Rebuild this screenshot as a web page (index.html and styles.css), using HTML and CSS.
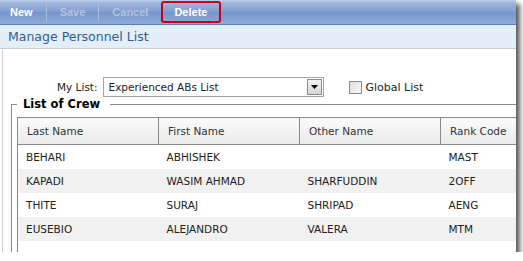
FILE: index.html
```html
<!DOCTYPE html>
<html lang="en">
<head>
    <meta charset="UTF-8">
    <title>Manage Personnel List</title>
    <link rel="stylesheet" href="styles.css">
</head>
<body>
    <div class="window">
        <div class="toolbar">
            <span class="tb-btn">New</span>
            <span class="tb-sep"></span>
            <span class="tb-btn off">Save</span>
            <span class="tb-sep"></span>
            <span class="tb-btn off">Cancel</span>
            <span class="tb-btn marked">Delete</span>
        </div>
        <div class="titlebar">Manage Personnel List</div>
        <div class="content">
            <div class="list-row">
                <span class="label">My List:</span>
                <div class="select">
                    <span class="select-text">Experienced ABs List</span>
                    <span class="select-arrow">
                        <svg width="7" height="4" viewBox="0 0 7 4"><path d="M0 0h7L3.5 4z" fill="#000"/></svg>
                    </span>
                </div>
                <span class="check"><span class="check-box"></span>Global List</span>
            </div>
            <fieldset class="crew">
                <legend>List of Crew</legend>
                <table class="grid">
                    <thead>
                        <tr><th>Last Name</th><th>First Name</th><th>Other Name</th><th>Rank Code</th></tr>
                    </thead>
                    <tbody>
                        <tr><td>BEHARI</td><td>ABHISHEK</td><td></td><td>MAST</td></tr>
                        <tr class="alt"><td>KAPADI</td><td>WASIM AHMAD</td><td>SHARFUDDIN</td><td>2OFF</td></tr>
                        <tr><td>THITE</td><td>SURAJ</td><td>SHRIPAD</td><td>AENG</td></tr>
                        <tr class="alt"><td>EUSEBIO</td><td>ALEJANDRO</td><td>VALERA</td><td>MTM</td></tr>
                        <tr><td></td><td></td><td></td><td></td></tr>
                    </tbody>
                </table>
            </fieldset>
        </div>
    </div>
</body>
</html>
```

FILE: styles.css
```css
body {
    margin: 0;
    background-color: #ffffff;
    font-family: "DejaVu Sans", Verdana, sans-serif;
}
.window {
    width: 516px;
    height: 252px;
    overflow: hidden;
    background-color: #ffffff;
    box-shadow: 4px 4px 5px rgba(0, 0, 0, 0.65);
    display: flex;
    flex-direction: column;
}
.toolbar {
    height: 24px;
    flex: none;
    display: flex;
    align-items: center;
    gap: 13px;
    padding-left: 10px;
    background: linear-gradient(#c3d1ea 0, #9fb4dc 12%, #86a2d2 45%, #7695ca 52%, #8eaad9 100%);
    border-bottom: 1px solid #5b7fbe;
    font-family: "Liberation Sans", Arial, sans-serif;
    font-size: 11px;
    font-weight: bold;
    color: #ffffff;
}
.tb-btn.off {
    color: #b4c4e0;
}
.tb-sep {
    width: 1px;
    height: 20px;
    background-color: #a9bde0;
}
.tb-btn.marked {
    height: 18px;
    line-height: 18px;
    padding: 0 12px 0 11px;
    border: 2px solid #c5001a;
    border-radius: 3px;
}
.titlebar {
    height: 23px;
    flex: none;
    line-height: 23px;
    padding-left: 8px;
    background-color: #e4eef9;
    border-bottom: 1px solid #c9cdd3;
    color: #2e5e8f;
    font-size: 12.5px;
}
.content {
    flex: 1;
    margin-left: 2px;
    border-left: 1px solid #cfcfcf;
    overflow: hidden;
    font-size: 10.5px;
    color: #222222;
}
.list-row {
    display: flex;
    align-items: center;
    height: 20px;
    margin-top: 28px;
    padding-left: 54px;
}
.label {
    margin-right: 5px;
}
.select {
    width: 219px;
    height: 18px;
    display: flex;
    align-items: center;
    justify-content: space-between;
    border: 1px solid #a5a5a5;
}
.select-text {
    padding-left: 5px;
}
.select-arrow {
    width: 15px;
    height: 16px;
    margin-right: 1px;
    display: flex;
    align-items: center;
    justify-content: center;
    border: 1px solid #8a8a8a;
    box-sizing: border-box;
    background: linear-gradient(#f4f4f4, #d6d6d6);
}
.check {
    display: flex;
    align-items: center;
    margin-left: 25px;
    font-size: 11px;
}
.check-box {
    width: 11px;
    height: 11px;
    margin-right: 4px;
    border: 1px solid #8c8c8c;
    background: linear-gradient(135deg, #dcdcdc, #fafafa);
}
.crew {
    width: 600px;
    margin: 0 0 0 8px;
    padding: 6px 5px 0;
    border: 1px solid #8a8a8a;
    border-right: none;
}
.crew legend {
    padding: 0 10px 0 6px;
    line-height: 14px;
    font-size: 11.5px;
    font-weight: bold;
    color: #000000;
}
.grid {
    border-collapse: collapse;
    border: 1px solid #8a8a8a;
    table-layout: fixed;
    width: 561px;
}
.grid th {
    width: 131px;
    height: 26px;
    padding: 0 0 0 9px;
    text-align: left;
    font-weight: normal;
    color: #333333;
    background: linear-gradient(#fbfbfb, #e9e9e9);
    border: 1px solid #8a8a8a;
}
.grid td {
    height: 24px;
    padding: 0 0 0 8px;
    white-space: nowrap;
}
.grid tr.alt td {
    background-color: #f1f1f1;
}
```
